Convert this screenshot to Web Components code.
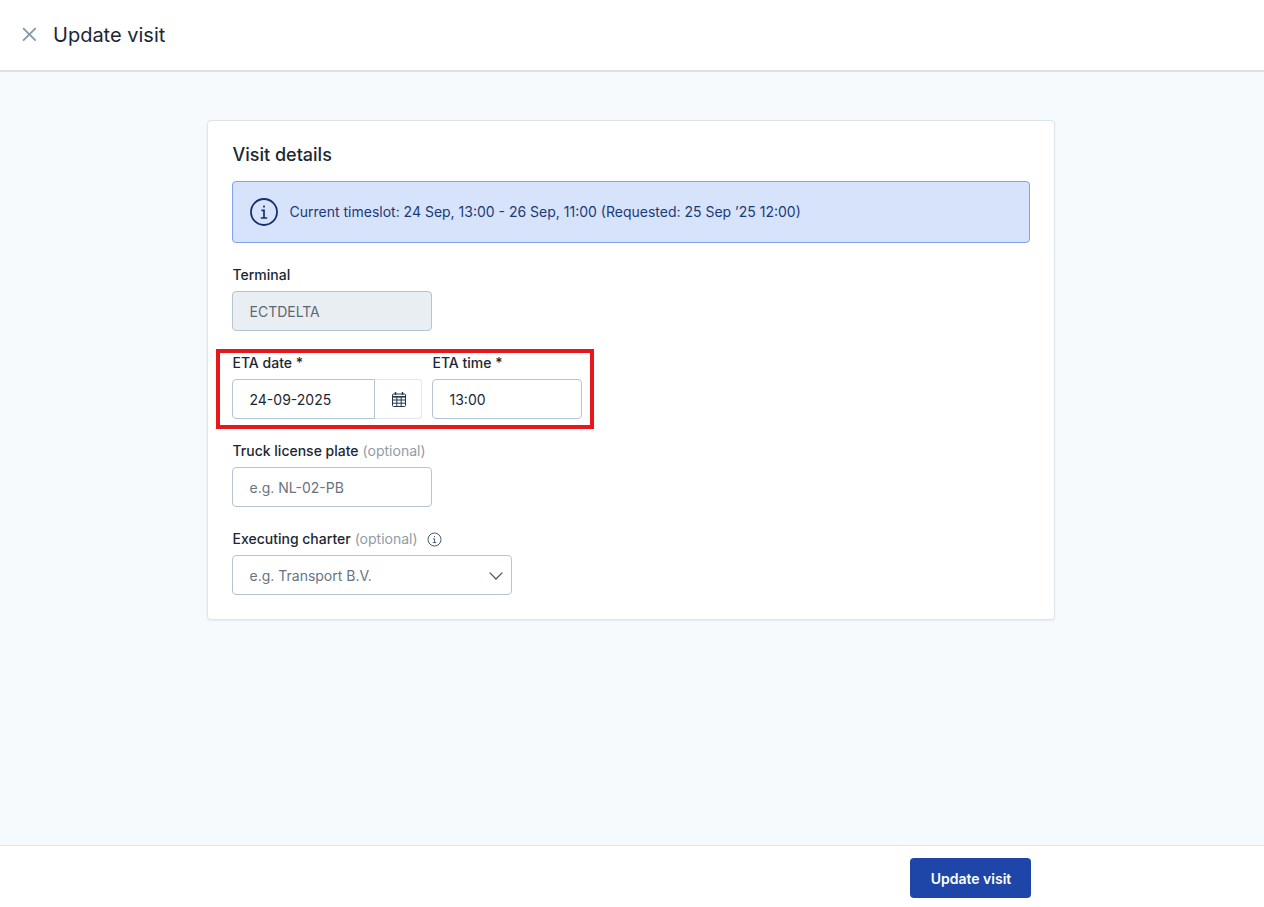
<!DOCTYPE html>
<html lang="en"><head><meta charset="utf-8"><title>Update visit</title>
<style>
html,body{margin:0;height:100%}
body{font-family:Inter,"Liberation Sans",sans-serif;color:#1b2733;background:#f6fafd}
</style></head>
<body>
<visit-page>
  <page-header slot="header">Update visit</page-header>
  <visit-card title="Visit details">
    <info-banner>Current timeslot: 24 Sep, 13:00 - 26 Sep, 11:00 (Requested: 25 Sep ’25 12:00)</info-banner>
    <form-field label="Terminal" style="margin-top:22px">
      <text-box width="200" disabled value="ECTDELTA"></text-box>
    </form-field>
    <highlight-box style="margin-top:22px">
      <form-field label="ETA date *"><date-box value="24-09-2025"></date-box></form-field>
      <form-field label="ETA time *"><text-box width="150" value="13:00"></text-box></form-field>
    </highlight-box>
    <form-field label="Truck license plate" optional style="margin-top:22px">
      <text-box width="200" placeholder="e.g. NL-02-PB"></text-box>
    </form-field>
    <form-field label="Executing charter" optional info style="margin-top:22px">
      <select-box placeholder="e.g. Transport B.V."></select-box>
    </form-field>
  </visit-card>
  <page-footer slot="footer"><primary-button>Update visit</primary-button></page-footer>
</visit-page>
<script>
function def(name, css, html){
  customElements.define(name, class extends HTMLElement{
    connectedCallback(){
      if(this.shadowRoot) return;
      const r=this.attachShadow({mode:'open'});
      r.innerHTML='<style>'+css+'</style>'+(typeof html==='function'?html(this):html);
    }
  });
}
const esc=s=>(s||'').replace(/&/g,'&amp;').replace(/</g,'&lt;');
def('visit-page',
 ':host{display:flex;flex-direction:column;height:907px}main{flex:1;display:flex;justify-content:center;padding-top:48px;min-height:0}',
 '<slot name="header"></slot><main><slot></slot></main><slot name="footer"></slot>');
def('page-header',
 ':host{display:flex;align-items:center;height:70px;background:#fff;border-bottom:2px solid #dae1e7;padding-left:22px;gap:16px;font-size:20px;line-height:28px;color:#1b2733}svg{display:block;flex:none;margin-top:-1px}',
 '<svg width="15" height="15" viewBox="0 0 15 15" fill="none" stroke="#8299ad" stroke-width="1.8"><path d="M1.1 1.1 13.7 13.7M13.7 1.1 1.1 13.7"/></svg><span><slot></slot></span>');
def('visit-card',
 ':host{display:block;box-sizing:border-box;width:848px;height:500px;margin-left:-2px;background:#fff;border:1px solid #dde5ec;border-radius:4px;box-shadow:0 1px 2px rgba(30,50,70,.08);padding:21px 24px 0 24px}h2{margin:0 0 13px;padding-left:.5px;font-size:18px;line-height:26px;font-weight:500;color:#1b2733}',
 h=>'<h2>'+esc(h.getAttribute('title'))+'</h2><slot></slot>');
def('info-banner',
 ':host{display:flex;align-items:center;box-sizing:border-box;height:62px;background:#d7e3fa;border:1px solid #7fa3e6;border-radius:4px;padding-left:15.5px;gap:11px;font-size:14px;line-height:20px;color:#1b3a78}svg{display:block;flex:none}',
 '<svg width="30" height="30" viewBox="0 0 30 30" fill="none" stroke="#14306e" stroke-width="1.8"><circle cx="15" cy="15" r="13"/><path d="M15 8.6v2M12.4 13.4H15v7.4M11.8 21h6.4" stroke-width="1.7"/></svg><span><slot></slot></span>');
def('form-field',
 ':host{display:block}.l{display:flex;align-items:center;height:20px;margin-bottom:6px;padding-left:.5px;font-size:14px;line-height:20px;font-weight:500;color:#1b2733;white-space:pre}.o{font-weight:400;color:#8f9ba6;margin-left:4px}svg{display:block;margin-left:9.5px}',
 h=>'<div class="l"><span>'+esc(h.getAttribute('label'))+'</span>'+(h.hasAttribute('optional')?'<span class="o">(optional)</span>':'')+(h.hasAttribute('info')?'<svg width="15" height="15" viewBox="0 0 15 15" fill="none" stroke="#4a5a6a" stroke-width="1"><circle cx="7.5" cy="7.5" r="6.5"/><path d="M7.5 4v1.2M6 6.9h1.6v3.6M5.8 10.6h3.4"/></svg>':'')+'</div><slot></slot>');
def('text-box',
 ':host{display:flex;align-items:center;box-sizing:border-box;height:40px;border:1px solid #b5c4d1;border-radius:4px;padding:1px 0 0 16.5px;font-size:14px;line-height:20px;background:#fff;color:#1b2733}:host([disabled]){background:#e9eef2;color:#5c6975}.p{color:#68747f}',
 h=>{h.style.width=h.getAttribute('width')+'px';return h.hasAttribute('placeholder')?'<span class="p">'+esc(h.getAttribute('placeholder'))+'</span>':'<span>'+esc(h.getAttribute('value'))+'</span>'});
def('date-box',
 ':host{display:flex;width:190px;height:40px;box-sizing:border-box;font-size:14px;line-height:20px;color:#1b2733}.v{box-sizing:border-box;width:143px;display:flex;align-items:center;padding:1px 0 0 16.5px;border:1px solid #b5c4d1;border-radius:4px 0 0 4px}.b{flex:1;display:flex;align-items:center;justify-content:center;padding-left:1px;border:1px solid #e0e6eb;border-left:0;border-radius:0 4px 4px 0}svg{display:block}',
 h=>'<div class="v">'+esc(h.getAttribute('value'))+'</div><div class="b"><svg width="16" height="17" viewBox="0 0 16 17" fill="none" stroke="#22384d" stroke-width="1"><rect x="1.5" y="3" width="13" height="12.5" rx="1"/><path d="M4.5 1v3M11.5 1v3" stroke-width="1.4"/><path d="M1.5 5.8h13" stroke-width="1.6"/><path d="M1.5 9h13M1.5 12.2h13M5.8 5.8v9.7M10.2 5.8v9.7"/></svg></div>');
def('select-box',
 ':host{display:flex;align-items:center;justify-content:space-between;box-sizing:border-box;width:280px;height:40px;border:1px solid #b5c4d1;border-radius:4px;padding:1px 8.5px 0 16.5px;font-size:14px;line-height:20px;color:#68747f;background:#fff}svg{display:block}',
 h=>'<span>'+esc(h.getAttribute('placeholder'))+'</span><svg width="14" height="8" viewBox="0 0 14 8" fill="none" stroke="#44566a" stroke-width="1.3" stroke-linecap="round"><path d="M1 .9 7 7 13 .9"/></svg>');
def('highlight-box',
 ':host{display:flex;gap:10px;position:relative}.r{position:absolute;left:-16px;top:-4px;width:378px;height:80px;box-sizing:border-box;border:4px solid #e8171c;pointer-events:none}',
 '<slot></slot><div class="r"></div>');
def('page-footer',
 ':host{display:flex;align-items:flex-start;justify-content:flex-end;box-sizing:border-box;height:62px;background:#fff;border-top:1px solid #dfe5ea;padding:12px 233px 0 0}',
 '<slot></slot>');
def('primary-button',
 ':host{display:flex;align-items:center;justify-content:center;width:121px;height:40px;box-sizing:border-box;padding:1px 0 0 1px;background:#1e46a8;border-radius:4px;color:#fff;font-size:14px;line-height:20px;font-weight:600}',
 '<slot></slot>');
</script>
</body></html>
